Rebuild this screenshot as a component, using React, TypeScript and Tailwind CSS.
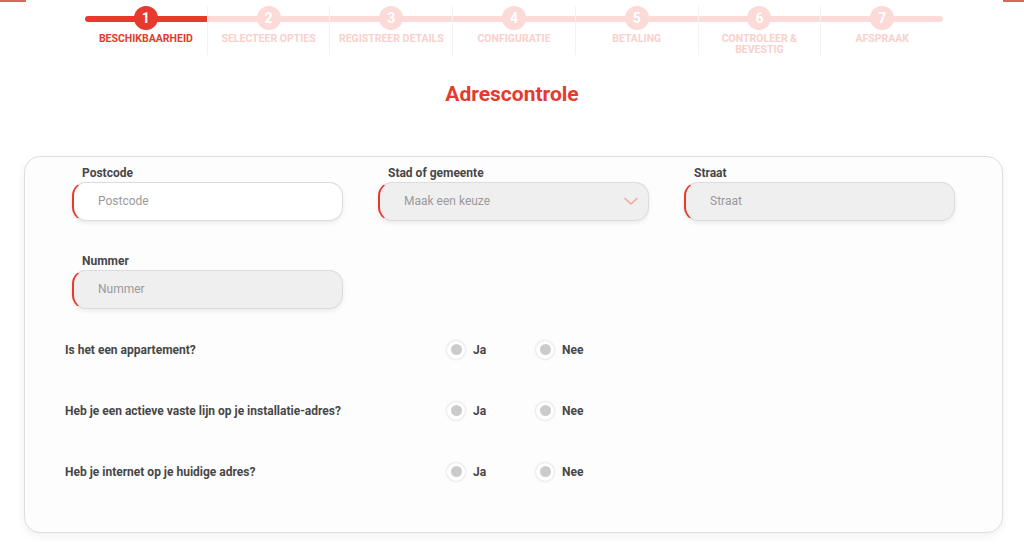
import React, { useState } from 'react';

const steps = [
    { n: 1, label: 'BESCHIKBAARHEID' },
    { n: 2, label: 'SELECTEER OPTIES' },
    { n: 3, label: 'REGISTREER DETAILS' },
    { n: 4, label: 'CONFIGURATIE' },
    { n: 5, label: 'BETALING' },
    { n: 6, label: 'CONTROLEER & BEVESTIG' },
    { n: 7, label: 'AFSPRAAK' },
];

const questions = [
    'Is het een appartement?',
    'Heb je een actieve vaste lijn op je installatie-adres?',
    'Heb je internet op je huidige adres?',
];

function Field({ label, placeholder, white, select }: { label: string; placeholder: string; white?: boolean; select?: boolean }) {
    return (
        <div className="flex flex-col">
            <label className="pl-[10px] text-[12px] font-bold leading-[14px] text-[#474747] mb-[2px]">{label}</label>
            <div
                className={`relative flex items-center h-[39px] rounded-[14px] border border-[#dcdcdc] border-l-2 border-l-[#e63a2e] shadow-[0_2px_4px_rgba(0,0,0,0.08)] ${white ? 'bg-white' : 'bg-[#efefef]'}`}
            >
                <span className="pl-[24px] text-[12px] text-[#9a9a9a]">{placeholder}</span>
                {select && (
                    <svg className="absolute right-[10px] top-[14px]" width="14" height="9" viewBox="0 0 14 9" fill="none">
                        <path d="M1 1.5 L7 7 L13 1.5" stroke="#f2a6a0" strokeWidth="1.6" strokeLinecap="round" strokeLinejoin="round" />
                    </svg>
                )}
            </div>
        </div>
    );
}

function Radio({ label }: { label: string }) {
    return (
        <div className="flex items-center gap-[8px]">
            <span className="flex items-center justify-center w-[18px] h-[18px] rounded-full bg-white shadow-[0_0_3px_rgba(0,0,0,0.2)]">
                <span className="w-[11px] h-[11px] rounded-full bg-[#cbcbcb]"></span>
            </span>
            <span className="text-[12px] font-bold text-[#474747]">{label}</span>
        </div>
    );
}

export default function App() {
    const [answers] = useState({});

    return (
        <div className="relative min-h-[551px] bg-white" style={{ fontFamily: 'Roboto, "Noto Sans", sans-serif' }}>
            <div className="absolute left-0 top-0 w-[26px] h-[2px] bg-[#d9675e]"></div>
            <div className="absolute right-0 top-0 w-[21px] h-[2px] bg-[#d9675e]"></div>

            {/* stepper */}
            <div className="flex ml-[85px] w-[858px] pt-[6px]">
                {steps.map((s, i) => {
                    const active = i === 0;
                    return (
                        <div key={s.n} className={`relative flex-1 flex flex-col items-center ${i > 0 ? 'border-l border-[#f6f0f0]' : ''}`}>
                            <div
                                className={`absolute top-[10px] left-0 right-0 h-[6px] ${active ? 'bg-[#e63a2e]' : 'bg-[#fbdad7]'} ${i === 0 ? 'rounded-l-full' : ''} ${i === steps.length - 1 ? 'rounded-r-full' : ''}`}
                            ></div>
                            <div
                                className={`relative z-10 flex items-center justify-center w-[24px] h-[24px] rounded-full text-[14px] font-bold text-white ${active ? 'bg-[#e63a2e]' : 'bg-[#fbdad7]'}`}
                            >
                                {s.n}
                            </div>
                            <div
                                className={`mt-[3px] w-[118px] text-center text-[10.5px] font-bold leading-[11px] ${active ? 'text-[#e63a2e]' : 'text-[#f9d0cc]'}`}
                            >
                                {s.n === 6 ? (
                                    <>
                                        CONTROLEER &amp;
                                        <br />
                                        BEVESTIG
                                    </>
                                ) : (
                                    s.label
                                )}
                            </div>
                        </div>
                    );
                })}
            </div>

            <h1 className="mt-[24px] text-center text-[21px] font-bold text-[#e63a2e]">Adrescontrole</h1>

            <div className="ml-[24px] mr-[21px] mt-[45px] h-[377px] rounded-[16px] border border-[#dedede] bg-[#fdfdfd] shadow-[0_3px_8px_rgba(0,0,0,0.06)] pt-[9px]">
                <div className="grid grid-cols-[271px_271px_271px] gap-x-[35px] gap-y-[33px] pl-[47px]">
                    <Field label="Postcode" placeholder="Postcode" white />
                    <Field label="Stad of gemeente" placeholder="Maak een keuze" select />
                    <Field label="Straat" placeholder="Straat" />
                    <Field label="Nummer" placeholder="Nummer" />
                </div>

                <div className="mt-[32px] pl-[40px] flex flex-col gap-[43px]">
                    {questions.map((q) => (
                        <div key={q} className="flex items-center h-[18px]">
                            <div className="w-[382px] text-[12px] font-bold text-[#474747]">{q}</div>
                            <div className="w-[89px]"><Radio label="Ja" /></div>
                            <Radio label="Nee" />
                        </div>
                    ))}
                </div>
            </div>
        </div>
    );
}
